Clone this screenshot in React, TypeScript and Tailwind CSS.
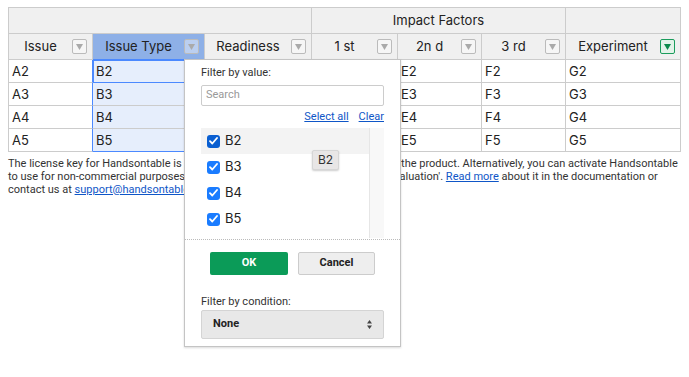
import React from "react";

const cols = [
  { key: "a", title: "Issue", w: "w-[84px]" },
  { key: "b", title: "Issue Type", w: "w-[112px]" },
  { key: "c", title: "Readiness", w: "w-[107px]" },
  { key: "d", title: "1 st", w: "w-[86px]" },
  { key: "e", title: "2n d", w: "w-[84px]" },
  { key: "f", title: "3 rd", w: "w-[84px]" },
  { key: "g", title: "Experiment", w: "w-[115px]" },
];

const rows = ["2", "3", "4", "5"];
const letters = ["A", "B", "C", "D", "E", "F", "G"];

const HeaderButton = ({ active }: { active?: boolean }) => (
  <span
    className={
      active
        ? "mr-[5px] flex h-[15px] w-[15px] items-center justify-center rounded-[2px] border border-[#1b9c5c] bg-[#e3f3e9]"
        : "mr-[5px] flex h-[15px] w-[15px] items-center justify-center rounded-[2px] border border-[#bbb] bg-white/40"
    }
  >
    <svg width="7" height="6" viewBox="0 0 7 6">
      <path d="M0 0h7L3.5 6z" fill={active ? "#0b8a4c" : "#aaa"} />
    </svg>
  </span>
);

const Check = ({ dark }: { dark?: boolean }) => (
  <span
    className={
      dark
        ? "flex h-[13px] w-[13px] items-center justify-center rounded-[3px] bg-[#0a5fd1]"
        : "flex h-[13px] w-[13px] items-center justify-center rounded-[3px] bg-[#1a7cff]"
    }
  >
    <svg width="9" height="8" viewBox="0 0 9 8">
      <path
        d="M1 4.2l2.3 2.3L8 1"
        fill="none"
        stroke="white"
        strokeWidth="1.8"
        strokeLinecap="round"
        strokeLinejoin="round"
      />
    </svg>
  </span>
);

const FilterMenu = () => (
  <div className="absolute left-[184px] top-[59px] flex h-[288px] w-[217px] flex-col border border-[#c4c4c4] bg-white font-['Roboto',sans-serif] text-[11px] text-[#333] shadow-[0_1px_2px_rgba(0,0,0,0.15)]">
    {/* by value */}
    <div className="px-[16px] pt-[6px]">
      <p className="leading-[14px]">Filter by value:</p>
      <div className="mt-[5px] flex h-[21px] items-center rounded-[2px] border border-[#ccc] px-[4px] text-[#999]">
        Search
      </div>
      <div className="mt-[4px] flex h-[15px] items-center justify-end gap-[10px] text-[#0f56c7] underline">
        <span>Select all</span>
        <span>Clear</span>
      </div>
      <div className="mt-[3px] flex h-[110px]">
        <div className="flex-1 font-['Inter',sans-serif] text-[13px] text-[#222]">
          {["B2", "B3", "B4", "B5"].map((v, i) => (
            <div
              key={v}
              className={
                i === 0
                  ? "flex h-[26px] items-center gap-[5px] bg-[#f3f3f3] pl-[6px]"
                  : "flex h-[26px] items-center gap-[5px] pl-[6px]"
              }
            >
              <Check dark={i === 0} />
              <span>{v}</span>
            </div>
          ))}
        </div>
        <div className="w-[15px] border-l border-[#e6e6e6] bg-[#f8f8f8]" />
      </div>
    </div>

    <div className="mt-[1px] border-t border-dotted border-[#bbb]" />

    {/* buttons */}
    <div className="mt-[12px] flex justify-center gap-[10px] font-bold">
      <button className="h-[23px] w-[78px] rounded-[2px] bg-[#0b9b58] text-white">
        OK
      </button>
      <button className="h-[23px] w-[77px] rounded-[2px] border border-[#ccc] bg-[#eee] text-[#222]">
        Cancel
      </button>
    </div>

    {/* by condition */}
    <div className="px-[16px]">
      <p className="mt-[20px] leading-[14px]">Filter by condition:</p>
      <div className="mt-[1px] flex h-[29px] items-center justify-between rounded-[2px] border border-[#d4d4d4] bg-[#e8e8e8] pl-[11px] pr-[11px] font-bold text-[#222]">
        <span>None</span>
        <svg width="5" height="9" viewBox="0 0 5 9">
          <path d="M0 3.5h5L2.5 0z M0 5.5h5L2.5 9z" fill="#444" />
        </svg>
      </div>
    </div>
  </div>
);

const App = () => {
  return (
    <div className="relative h-[377px] w-[689px] overflow-hidden bg-white font-['Inter',sans-serif] text-[#222]">
      <div className="pl-[8px] pt-[7px]">
        {/* Table */}
        <div className="flex w-[673px] flex-col border-l border-t border-[#ccc] text-[13px]">
          {/* group header */}
          <div className="flex h-[26px] bg-[#f0f0f0]">
            <div className="w-[303px] border-b border-r border-[#ccc]" />
            <div className="flex w-[254px] items-center justify-center border-b border-r border-[#ccc]">
              Impact Factors
            </div>
            <div className="w-[115px] border-b border-r border-[#ccc]" />
          </div>

          {/* column header */}
          <div className="flex h-[26px]">
            {cols.map((c) => (
              <div
                key={c.key}
                className={
                  c.key === "b"
                    ? `${c.w} flex items-center border-b border-r border-b-[#4b89ff] border-r-[#ccc] bg-[#8eb0e7]`
                    : `${c.w} flex items-center border-b border-r border-[#ccc] bg-[#f0f0f0]`
                }
              >
                <span className="flex-1 text-center">{c.title}</span>
                <HeaderButton active={c.key === "g"} />
              </div>
            ))}
          </div>

          {/* data */}
          {rows.map((r, ri) => (
            <div key={r} className="flex h-[23px]">
              {cols.map((c, ci) => {
                let cls = `${c.w} border-b border-r border-[#ccc] px-[3px] leading-[22px]`;
                if (c.key === "a") {
                  cls = `${c.w} border-b border-r border-b-[#ccc] border-r-[#4b89ff] px-[3px] leading-[22px]`;
                }
                if (c.key === "b") {
                  cls =
                    ri === 0
                      ? `${c.w} border-b border-r border-b-[#4b89ff] border-r-[#ccc] bg-[#e6eefc] px-[3px] leading-[22px] shadow-[inset_1px_1px_0_#4b89ff]`
                      : ri === 3
                        ? `${c.w} border-b border-r border-b-[#4b89ff] border-r-[#ccc] bg-[#e6eefc] px-[3px] leading-[22px]`
                        : `${c.w} border-b border-r border-[#ccc] bg-[#e6eefc] px-[3px] leading-[22px]`;
                }
                return (
                  <div key={c.key} className={cls}>
                    {letters[ci]}
                    {r}
                  </div>
                );
              })}
            </div>
          ))}
        </div>

        {/* License notice */}
        <p className="mt-[5px] whitespace-nowrap font-['Roboto',sans-serif] text-[11px] leading-[13px] text-[#333]">
          The license key for Handsontable is missing. Use your purchased key to activate the
          product. Alternatively, you can activate Handsontable
          <br />
          to use for non-commercial purposes by passing the key:
          'non-commercial-and-evaluation'.{" "}
          <span className="text-[#0f56c7] underline">Read more</span> about it in the
          documentation or
          <br />
          contact us at{" "}
          <span className="text-[#0f56c7] underline">support@handsontable.com</span>.
        </p>
      </div>

      <FilterMenu />

      {/* tooltip */}
      <div className="absolute left-[312px] top-[150px] flex h-[20px] w-[27px] items-center justify-center rounded-[2px] border border-[#d6d6d6] bg-[#e8e6e6] text-[12px] text-[#333] shadow-[0_1px_2px_rgba(0,0,0,0.2)]">
        B2
      </div>
    </div>
  );
};

export default App;
